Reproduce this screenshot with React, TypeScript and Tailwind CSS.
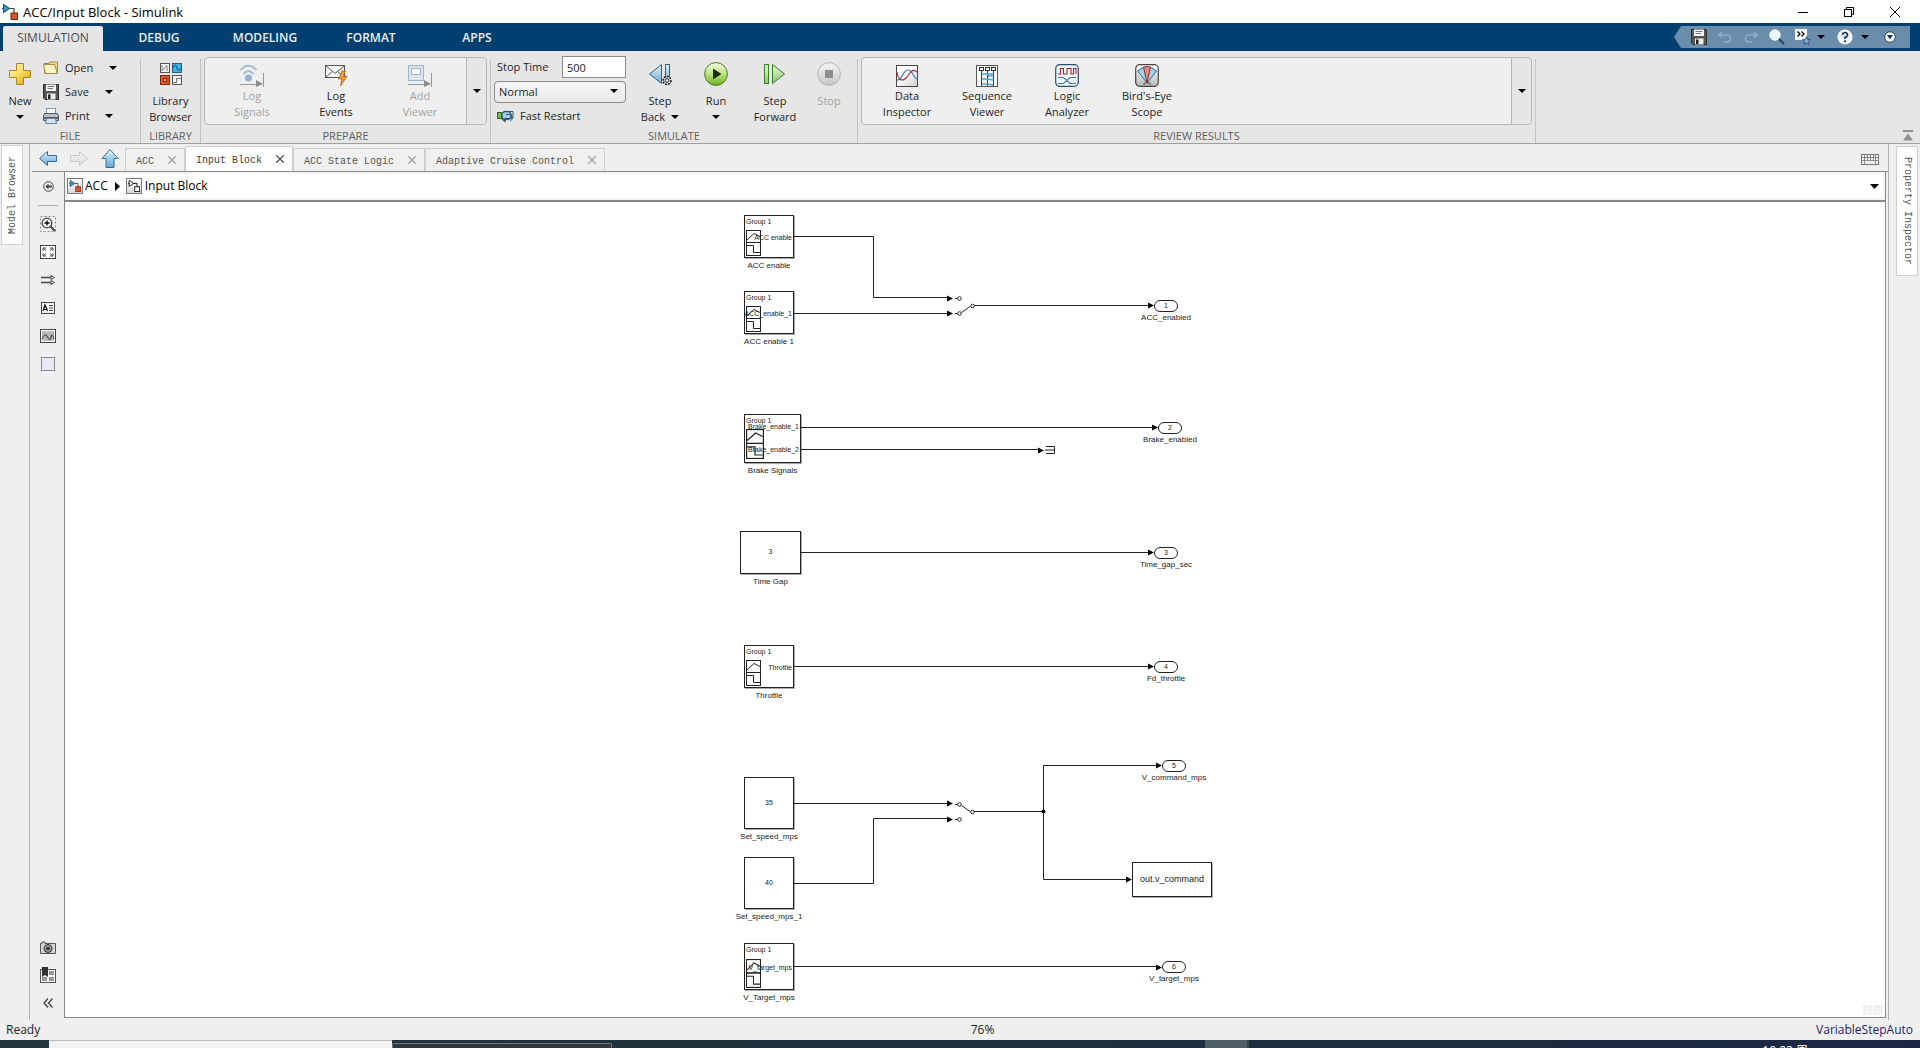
import type { ReactNode } from "react";

const UI = "font-['Open_Sans','Noto_Sans_CJK_SC',sans-serif]";
const MONO = "font-['Liberation_Mono',monospace]";

/* ---------- small icons ---------- */

function Caret({ wide = false }: { wide?: boolean }) {
  return (
    <svg width={wide ? 9 : 8} height={wide ? 5 : 4} viewBox="0 0 8 4" preserveAspectRatio="none" aria-hidden>
      <path d="M0 0H8L4 4Z" fill="#000" />
    </svg>
  );
}

function AppLogo({ size = 16, mono = false }: { size?: number; mono?: boolean }) {
  return (
    <svg width={size} height={size} viewBox="0 0 16 16" aria-hidden>
      <path d="M7 4.5H12V9" fill="none" stroke={mono ? "#000" : "#444"} strokeWidth="1.2" />
      <path d="M1.5 0.5V8.5L7.5 4.5Z" fill={mono ? "#fff" : "#3d9bd0"} stroke={mono ? "#000" : "#1f5878"} strokeWidth="1.1" />
      <path d="M0 4.5H2" stroke={mono ? "#000" : "#1f5878"} />
      <rect x="9" y="9" width="6.5" height="6.5" fill={mono ? "#fff" : "#d9532c"} stroke={mono ? "#000" : "#7d2c12"} strokeWidth="1.1" />
    </svg>
  );
}

function CrumbIcon({ mono = false }: { mono?: boolean }) {
  return (
    <span className="flex size-4 items-center justify-center border border-[#777] bg-linear-to-b from-white to-[#d8d8d8]">
      <AppLogo size={12} mono={mono} />
    </span>
  );
}

function PlusIcon() {
  return (
    <svg width="24" height="24" viewBox="0 0 24 24" aria-hidden>
      <defs>
        <linearGradient id="plus" x1="0" y1="0" x2="1" y2="1">
          <stop offset="0" stopColor="#fffbd0" />
          <stop offset="0.5" stopColor="#f9d95a" />
          <stop offset="1" stopColor="#dc9a1c" />
        </linearGradient>
      </defs>
      <path d="M8.5 1.5H15.5V8.5H22.5V15.5H15.5V22.5H8.5V15.5H1.5V8.5H8.5Z" fill="url(#plus)" stroke="#a8842c" />
    </svg>
  );
}

function FolderIcon() {
  return (
    <svg width="16" height="16" viewBox="0 0 16 16" aria-hidden>
      <path d="M1 3.5H6L7 2H14.5V13.5H2Z" fill="#f3dc8c" stroke="#9c8337" />
      <path d="M0.5 4.5H11.5L14.5 13.5H2.5Z" fill="#fdf3c4" stroke="#9c8337" strokeWidth="0.9" />
    </svg>
  );
}

function DiskIcon() {
  return (
    <svg width="16" height="16" viewBox="0 0 16 16" aria-hidden>
      <path d="M0.5 0.5H15.5V15.5H2L0.5 14Z" fill="#555" stroke="#2d2d2d" />
      <rect x="3" y="0.5" width="10" height="6.5" fill="#f5f5f5" />
      <path d="M4.5 2.5H11.5M4.5 4.5H10" stroke="#777" />
      <rect x="4" y="9.5" width="8.5" height="6" fill="#e9e9e9" />
      <rect x="5" y="10.5" width="2.5" height="4.5" fill="#222" />
    </svg>
  );
}

function PrinterIcon() {
  return (
    <svg width="16" height="16" viewBox="0 0 16 16" aria-hidden>
      <rect x="3.5" y="0.5" width="9" height="6" fill="#fff" stroke="#8a97a5" />
      <path d="M1.5 5.5H14.5L15.5 8V12.5H0.5V8Z" fill="#b9bec4" stroke="#54595f" />
      <path d="M1 9H15V11H1Z" fill="#5a6066" />
      <path d="M3.5 10.5H12.5L13.5 15.5H2.5Z" fill="#d4e6f4" stroke="#66809a" />
    </svg>
  );
}

function LibraryIcon() {
  return (
    <svg width="24" height="24" viewBox="0 0 24 24" aria-hidden>
      <rect x="1.5" y="1.5" width="9" height="9" fill="#eee" stroke="#555" />
      <path d="M3 3V9M3 9L8 3M8 9V4" stroke="#888" fill="none" />
      <rect x="13.5" y="1.5" width="9" height="9" fill="#3fb0e0" stroke="#1f6488" />
      <path d="M14 6C15.5 2.5 17 2.5 18 6S20.5 9 22 6" stroke="#124a68" fill="none" />
      <rect x="1.5" y="13.5" width="9" height="9" fill="#dd5527" stroke="#7a2b12" />
      <rect x="4.5" y="16.5" width="3" height="3" fill="#f6a07e" stroke="#7a2b12" />
      <rect x="13.5" y="13.5" width="9" height="9" fill="#f6f6f6" stroke="#555" />
      <path d="M14 20.5H17.5V16.5H22" stroke="#777" fill="none" />
    </svg>
  );
}

function LogSignalsIcon() {
  return (
    <svg width="24" height="24" viewBox="0 0 24 24" aria-hidden>
      <g fill="none" stroke="#a7bfd2" strokeWidth="2">
        <path d="M0.5 7Q8.5 -1.5 16.5 7" />
        <path d="M3.5 11Q8.5 5 13.5 11" />
      </g>
      <circle cx="8.5" cy="15" r="3.5" fill="#93b4cc" />
      <path d="M0 21.5H17M23.5 10V24" stroke="#999" strokeWidth="1.2" />
      <path d="M16 17V24L23 21Z" fill="#8b8b8b" />
    </svg>
  );
}

function LogEventsIcon() {
  return (
    <svg width="24" height="24" viewBox="0 0 24 24" aria-hidden>
      <rect x="1.5" y="2.5" width="19" height="12" fill="#fafafa" stroke="#555" />
      <path d="M2 3L11 10.5L20 3M2 14L8.5 8.5M20 14L13.5 8.5" fill="none" stroke="#555" />
      <path d="M18 8L14.5 16H18L16.5 23L23 13.5H19.5L21.5 8Z" fill="#f79a31" stroke="#a3501a" strokeWidth="0.7" />
    </svg>
  );
}

function AddViewerIcon() {
  return (
    <svg width="24" height="24" viewBox="0 0 24 24" aria-hidden>
      <rect x="0.5" y="2.5" width="15" height="15" fill="#dce5ee" stroke="#a3b3c2" />
      <rect x="3.5" y="5.5" width="9" height="6" fill="#fff" stroke="#9fb4c8" />
      <path d="M0 21.5H17M23.5 10V24" stroke="#999" strokeWidth="1.2" />
      <path d="M16 17V24L23 21Z" fill="#8b8b8b" />
    </svg>
  );
}

function FastRestartIcon() {
  return (
    <svg width="17" height="14" viewBox="0 0 17 14" aria-hidden>
      <rect x="0.5" y="3.5" width="4" height="6" fill="#6fbf4b" stroke="#3a5a2c" />
      <rect x="5" y="2.5" width="9" height="8" rx="3.5" fill="#a9cdea" stroke="#2f5878" strokeWidth="1.3" />
      <path d="M9 5.5H12.5A2.5 2 0 0 1 12.5 9.5H8V12.5L4.5 9.5" fill="none" stroke="#2f5878" strokeWidth="1.2" />
      <path d="M11.5 2.5H16V9L13 12.5" fill="none" stroke="#2f5878" />
    </svg>
  );
}

function StepBackIcon() {
  return (
    <svg width="24" height="24" viewBox="0 0 24 24" aria-hidden>
      <defs>
        <linearGradient id="sback" x1="0" y1="0" x2="0" y2="1">
          <stop offset="0" stopColor="#e3f1fb" />
          <stop offset="1" stopColor="#6fa9d4" />
        </linearGradient>
      </defs>
      <path d="M13.5 2.5V21.5L1.5 12Z" fill="url(#sback)" stroke="#2f6288" />
      <rect x="17.5" y="2.5" width="4" height="17" fill="url(#sback)" stroke="#2f6288" />
      <circle cx="19" cy="18.5" r="4" fill="#d8d8d8" stroke="#222" strokeWidth="1.6" strokeDasharray="2 1" />
      <circle cx="19" cy="18.5" r="1.8" fill="#fff" stroke="#222" />
    </svg>
  );
}

function RunIcon({ stop = false }: { stop?: boolean }) {
  const id = stop ? "stopball" : "runball";
  return (
    <svg width="24" height="24" viewBox="0 0 24 24" aria-hidden>
      <defs>
        <linearGradient id={id} x1="0" y1="0" x2="0" y2="1">
          <stop offset="0" stopColor={stop ? "#f4f4f4" : "#f3fbe4"} />
          <stop offset="0.5" stopColor={stop ? "#dedede" : "#bfe37c"} />
          <stop offset="1" stopColor={stop ? "#c4c4c4" : "#69b025"} />
        </linearGradient>
      </defs>
      <circle cx="12" cy="12" r="11.4" fill={`url(#${id})`} stroke={stop ? "#b5b5b5" : "#4e7a28"} />
      {stop ? <rect x="8" y="8" width="8" height="8" fill="#8e8e8e" /> : <path d="M9 6.5V17.5L17.5 12Z" fill="#1c2a14" />}
    </svg>
  );
}

function StepForwardIcon() {
  return (
    <svg width="24" height="24" viewBox="0 0 24 24" aria-hidden>
      <defs>
        <linearGradient id="sfwd" x1="0" y1="0" x2="0" y2="1">
          <stop offset="0" stopColor="#e6f6da" />
          <stop offset="1" stopColor="#8ccb6b" />
        </linearGradient>
      </defs>
      <rect x="1.5" y="2.5" width="4" height="19" fill="url(#sfwd)" stroke="#3d7a2a" />
      <path d="M9.5 2.5V21.5L21.5 12Z" fill="url(#sfwd)" stroke="#3d7a2a" />
    </svg>
  );
}

function DataInspectorIcon() {
  return (
    <svg width="24" height="24" viewBox="0 0 24 24" aria-hidden>
      <defs>
        <linearGradient id="insp" x1="0" y1="0" x2="1" y2="1">
          <stop offset="0.4" stopColor="#fff" />
          <stop offset="1" stopColor="#cfcfcf" />
        </linearGradient>
      </defs>
      <rect x="1.5" y="2.5" width="21" height="21" fill="url(#insp)" stroke="#444" />
      <path d="M2 17C7 18 8 7 13 7S18 15 22 16" fill="none" stroke="#3d7ab5" strokeWidth="1.2" />
      <path d="M2 9C3 17 7 19 11 15S17 4 22 9" fill="none" stroke="#b03030" strokeWidth="1.2" />
    </svg>
  );
}

function SequenceIcon() {
  return (
    <svg width="24" height="24" viewBox="0 0 24 24" aria-hidden>
      <rect x="1.5" y="2.5" width="21" height="21" fill="#fafafa" stroke="#555" />
      <g fill="#fff" stroke="#333">
        <rect x="4.5" y="4.5" width="4" height="3" />
        <rect x="10.5" y="4.5" width="4" height="3" />
        <rect x="16.5" y="4.5" width="4" height="3" />
      </g>
      <path d="M6.5 8V23M12.5 8V23M18.5 8V23" stroke="#333" />
      <path d="M6.5 11H18.5M6.5 16H12.5L18.5 17M6.5 21H12.5L18.5 22M12.5 13H18.5" stroke="#4aa3df" strokeWidth="1.4" fill="none" />
    </svg>
  );
}

function LogicIcon() {
  return (
    <svg width="24" height="24" viewBox="0 0 24 24" aria-hidden>
      <rect x="0.7" y="1.7" width="22.6" height="21.6" rx="4" fill="#f4f8fc" stroke="#2d4a75" strokeWidth="1.2" />
      <path d="M3 11H5.5V5.5H8.5V11H12V5.5H16V11H18.5V5.5H21V11" fill="none" stroke="#9c2626" strokeWidth="1.1" />
      <path d="M3 14.5H8.5L15 20.5H21M3 20.5H8.5L15 14.5H21" fill="none" stroke="#3a78b0" strokeWidth="1.1" />
    </svg>
  );
}

function BirdsEyeIcon() {
  return (
    <svg width="24" height="24" viewBox="0 0 24 24" aria-hidden>
      <defs>
        <linearGradient id="bird" x1="0" y1="0" x2="0" y2="1">
          <stop offset="0" stopColor="#fff" />
          <stop offset="1" stopColor="#b9b9b9" />
        </linearGradient>
      </defs>
      <rect x="0.7" y="1.7" width="22.6" height="21.6" rx="4" fill="url(#bird)" stroke="#444" strokeWidth="1.2" />
      <path d="M12 20L2.5 8Q12 0 21.5 8Z" fill="#9fd3f3" stroke="#33658a" />
      <path d="M12 20L8.5 4Q12 3 15.5 4Z" fill="#e08b80" stroke="#8e2f2a" />
      <path d="M9 22V20H15V22" fill="none" stroke="#555" />
    </svg>
  );
}

function NavArrow({ dir, off = false }: { dir: "left" | "right" | "up"; off?: boolean }) {
  const id = `nav-${dir}`;
  const d = {
    left: "M1.5 9.5L9.5 2.5V6.5H18.5V12.5H9.5V16.5Z",
    right: "M18.5 9.5L10.5 2.5V6.5H1.5V12.5H10.5V16.5Z",
    up: "M10 0.5L18 9.5H14V18.5H6V9.5H2Z",
  }[dir];
  return (
    <svg width="20" height="20" viewBox="0 0 20 20" aria-hidden>
      <defs>
        <linearGradient id={id} x1="0" y1="0" x2="0" y2="1">
          <stop offset="0" stopColor={off ? "#f2f2f2" : "#e2f2fb"} />
          <stop offset="1" stopColor={off ? "#dcdcdc" : "#5fa6d6"} />
        </linearGradient>
      </defs>
      <path d={d} fill={`url(#${id})`} stroke={off ? "#c9c9c9" : "#3b6c92"} />
    </svg>
  );
}

/* ---------- ribbon ---------- */

function Section({ title, className = "", children }: { title: string; className?: string; children: ReactNode }) {
  return (
    <>
      <section className={`flex shrink-0 flex-col ${className}`}>
        <div className="flex flex-1 pt-1">{children}</div>
        <h2 className="h-3.5 text-center text-[11px] leading-3.5 text-[#5f5f5f]">{title}</h2>
      </section>
      <div className="mt-2 w-px shrink-0 bg-[#c2c2c2]" />
    </>
  );
}

function BigButton({ icon, top, bottom, width, off = false }: { icon: ReactNode; top: string; bottom?: ReactNode; width: string; off?: boolean }) {
  return (
    <button
      disabled={off}
      className={`flex flex-col items-center pt-[7px] text-[11px] leading-4 ${width} ${off ? "text-[#a3a3a3]" : "text-[#1e1e1e]"}`}
    >
      {icon}
      <span className="mt-[7px]">{top}</span>
      <span className="flex h-4 items-center gap-1.5">{bottom}</span>
    </button>
  );
}

function FileRow({ icon, label, caret }: { icon: ReactNode; label: string; caret: string }) {
  return (
    <div className="flex h-6 items-center">
      <button className="flex items-center gap-1.5 text-[11px] text-[#1e1e1e]">
        {icon}
        {label}
      </button>
      <button aria-label={`${label} options`} className={`absolute ${caret}`}>
        <Caret />
      </button>
    </div>
  );
}

type GalleryItem = { icon: ReactNode; lines: string[]; off?: boolean };

function Gallery({ items, item, label }: { items: GalleryItem[]; item: string; label: string }) {
  return (
    <div className="mx-[3px] mt-0.5 flex h-[68px] flex-1 rounded border border-[#b5b5b5] bg-[#efefef]">
      <div className="flex flex-1 pl-[5px]">
        {items.map((g) => (
          <button
            key={g.lines.join(" ")}
            disabled={g.off}
            className={`flex flex-col items-center pt-[5px] text-[11px] leading-4 ${item} ${g.off ? "text-[#a3a3a3]" : "text-[#1e1e1e]"}`}
          >
            {g.icon}
            <span className="mt-px">{g.lines[0]}</span>
            <span>{g.lines[1]}</span>
          </button>
        ))}
      </div>
      <button aria-label={label} className="flex w-5 items-center justify-center rounded-r border-l border-[#b5b5b5] bg-[#e6e6e6]">
        <Caret />
      </button>
    </div>
  );
}

function Ribbon() {
  return (
    <div className="flex h-[93px] border-b border-[#a0a0a0] bg-[#e6e6e6]">
      <Section title="FILE" className="w-[140px]">
        <BigButton icon={<PlusIcon />} top="New" bottom={<Caret />} width="w-10" />
        <div className="relative ml-[3px] flex flex-1 flex-col pt-px">
          <FileRow icon={<FolderIcon />} label="Open" caret="left-[66px]" />
          <FileRow icon={<DiskIcon />} label="Save" caret="left-[62px]" />
          <FileRow icon={<PrinterIcon />} label="Print" caret="left-[62px]" />
        </div>
      </Section>
      <Section title="LIBRARY" className="w-[59px]">
        <BigButton icon={<LibraryIcon />} top="Library" bottom="Browser" width="w-full" />
      </Section>
      <Section title="PREPARE" className="w-[289px]">
        <Gallery
          label="More prepare tools"
          item="w-[84px]"
          items={[
            { icon: <LogSignalsIcon />, lines: ["Log", "Signals"], off: true },
            { icon: <LogEventsIcon />, lines: ["Log", "Events"] },
            { icon: <AddViewerIcon />, lines: ["Add", "Viewer"], off: true },
          ]}
        />
      </Section>
      <Section title="SIMULATE" className="w-[366px]">
        <div className="ml-[3px] flex w-[132px] flex-col gap-[3px] pt-px text-[11px] text-[#1e1e1e]">
          <div className="flex items-center justify-between pl-[3px]">
            <label htmlFor="stop-time">Stop Time</label>
            <input id="stop-time" defaultValue="500" className="h-[22px] w-16 border border-[#8c8c8c] bg-white pl-1 outline-none" />
          </div>
          <div className="relative h-[22px]">
            <select
              aria-label="Simulation mode"
              className="h-full w-full appearance-none rounded border border-[#8c8c8c] bg-linear-to-b from-[#f4f4f4] to-[#ebebeb] pl-1"
            >
              <option>Normal</option>
            </select>
            <span className="pointer-events-none absolute top-2 right-2">
              <Caret />
            </span>
          </div>
          <button className="flex h-5 items-center gap-1.5 pl-[3px]">
            <FastRestartIcon />
            Fast Restart
          </button>
        </div>
        <div className="ml-1.5 flex">
          <BigButton
            icon={<StepBackIcon />}
            top="Step"
            bottom={
              <>
                Back <Caret />
              </>
            }
            width="w-14"
          />
          <BigButton icon={<RunIcon />} top="Run" bottom={<Caret />} width="w-14" />
          <BigButton icon={<StepForwardIcon />} top="Step" bottom="Forward" width="w-[62px]" />
          <BigButton icon={<RunIcon stop />} top="Stop" width="w-[46px]" off />
        </div>
      </Section>
      <Section title="REVIEW RESULTS" className="w-[677px]">
        <Gallery
          label="More review tools"
          item="w-20"
          items={[
            { icon: <DataInspectorIcon />, lines: ["Data", "Inspector"] },
            { icon: <SequenceIcon />, lines: ["Sequence", "Viewer"] },
            { icon: <LogicIcon />, lines: ["Logic", "Analyzer"] },
            { icon: <BirdsEyeIcon />, lines: ["Bird's-Eye", "Scope"] },
          ]}
        />
      </Section>
      <div className="flex flex-1 items-end justify-end pr-[7px] pb-0.5">
        <button aria-label="Minimize toolstrip">
          <svg width="10" height="11" viewBox="0 0 10 11" fill="#8f8f8f" aria-hidden>
            <path d="M5 3.5L0 10.5H10Z" />
            <rect width="10" height="2" />
          </svg>
        </button>
      </div>
    </div>
  );
}

/* ---------- title and ribbon tabs ---------- */

function TitleBar() {
  const win = "flex w-[46px] items-center justify-center";
  return (
    <header className="flex h-[23px] bg-white pr-0.5">
      <div className="flex flex-1 items-center gap-[5px] pl-0.5">
        <AppLogo />
        <h1 className="text-[13px] leading-5 text-black">ACC/Input Block - Simulink</h1>
      </div>
      <button aria-label="Minimize" className={win}>
        <svg width="10" height="10" aria-hidden><path d="M0 5.5H10" stroke="#000" /></svg>
      </button>
      <button aria-label="Restore" className={win}>
        <svg width="10" height="10" fill="none" stroke="#000" aria-hidden>
          <rect x="0.5" y="2.5" width="7" height="7" />
          <path d="M2.5 2.5V0.5H9.5V7.5H7.5" />
        </svg>
      </button>
      <button aria-label="Close" className={win}>
        <svg width="10" height="10" stroke="#000" aria-hidden><path d="M0 0L10 10M10 0L0 10" /></svg>
      </button>
    </header>
  );
}

function QuickAccess() {
  const btn = "flex w-[26px] items-center justify-center";
  return (
    <div className="mt-[3px] flex h-[22px] bg-[#6a8dac] pr-[7px] pl-3 [clip-path:polygon(7px_0,100%_0,100%_100%,7px_100%,0_50%)]">
      <button aria-label="Save" className={btn}><DiskIcon /></button>
      <button aria-label="Undo" className={btn}>
        <svg width="16" height="16" viewBox="0 0 16 16" fill="none" stroke="#8fb0cc" strokeWidth="1.6" aria-hidden>
          <path d="M5 3L2 6L5 9M2 6H10A3.5 3.5 0 0 1 10 13H7" />
        </svg>
      </button>
      <button aria-label="Redo" className={btn}>
        <svg width="16" height="16" viewBox="0 0 16 16" fill="none" stroke="#8fb0cc" strokeWidth="1.6" aria-hidden>
          <path d="M11 3L14 6L11 9M14 6H6A3.5 3.5 0 0 0 6 13H9" />
        </svg>
      </button>
      <button aria-label="Search" className={btn}>
        <svg width="16" height="16" viewBox="0 0 16 16" aria-hidden>
          <path d="M9.5 9.5L15 15" stroke="#1f4a74" strokeWidth="2.4" />
          <circle cx="6" cy="6" r="5.2" fill="#e9f3fa" stroke="#fff" />
        </svg>
      </button>
      <button aria-label="Favorites" className={btn}>
        <svg width="16" height="16" viewBox="0 0 16 16" aria-hidden>
          <rect width="12" height="11" fill="#fff" />
          <path d="M2.5 2.5L5 5L2.5 7.5M6.5 2.5L9 5L6.5 7.5" fill="none" stroke="#000" strokeWidth="1.3" />
          <path d="M11.5 7.5L12.7 10.4L15.7 10.6L13.4 12.5L14.2 15.5L11.5 13.9L8.9 15.5L9.6 12.5L7.3 10.6L10.3 10.4Z" fill="#7fa6c9" stroke="#24507c" strokeWidth="0.8" />
        </svg>
      </button>
      <button aria-label="Favorites menu" className="flex w-2.5 items-center justify-center"><Caret /></button>
      <button aria-label="Help" className={`ml-1.5 ${btn}`}>
        <svg width="16" height="16" viewBox="0 0 16 16" aria-hidden>
          <circle cx="8" cy="8" r="7.6" fill="#eef4f9" />
          <path d="M5.5 6A2.5 2.4 0 1 1 8 8.3V10" fill="none" stroke="#1f3a56" strokeWidth="1.7" />
          <circle cx="8" cy="12.3" r="1.1" fill="#1f3a56" />
        </svg>
      </button>
      <button aria-label="Help menu" className="ml-0.5 flex w-2.5 items-center justify-center"><Caret /></button>
      <button aria-label="Customize" className={`ml-[7px] ${btn}`}>
        <svg width="12" height="12" viewBox="0 0 12 12" aria-hidden>
          <circle cx="6" cy="6" r="5.2" fill="#fff" stroke="#0b3560" strokeWidth="0.8" />
          <path d="M3 4H9L6 8.5Z" fill="#0b3560" />
        </svg>
      </button>
    </div>
  );
}

function RibbonTabs() {
  return (
    <nav className="flex h-7 bg-[#004071] pr-2.5">
      <div role="tablist" className="flex flex-1 gap-1.5 pt-[3px] pl-[3px]">
        {["SIMULATION", "DEBUG", "MODELING", "FORMAT", "APPS"].map((t, i) => (
          <button
            key={t}
            role="tab"
            aria-selected={i === 0}
            className={`w-[100px] rounded-t-xs pb-0.5 text-xs ${i === 0 ? "bg-[#e6e6e6] text-[#4a4a4a]" : "font-semibold text-[#e8eff5]"}`}
          >
            {t}
          </button>
        ))}
      </div>
      <QuickAccess />
    </nav>
  );
}

/* ---------- editor ---------- */

const docs = ["ACC", "Input Block", "ACC State Logic", "Adaptive Cruise Control"];

function DocTabs() {
  const nav = "flex h-full w-[31px] items-center justify-center pt-0.5";
  return (
    <div className="ml-0.5 flex h-7 items-end border-b border-[#85888d]">
      <button aria-label="Back" className={nav}><NavArrow dir="left" /></button>
      <button aria-label="Forward" disabled className={nav}><NavArrow dir="right" off /></button>
      <button aria-label="Up to parent" className={nav}><NavArrow dir="up" /></button>
      {docs.map((d) => {
        const on = d === "Input Block";
        return (
          <div
            key={d}
            className={`flex items-center gap-3.5 border border-b-0 border-[#cfcfcf] pr-2 pl-2.5 text-[10px] ${MONO} ${on ? "h-[25px] bg-white text-[#3c3c3c]" : "h-[23px] bg-[#f0f0f0] text-[#555]"}`}
          >
            <button className="pt-0.5">{d}</button>
            <button aria-label={`Close ${d}`}>
              <svg width="8" height="8" stroke={on ? "#555" : "#a2a2a2"} strokeWidth="1.3" aria-hidden><path d="M0 0L8 8M8 0L0 8" /></svg>
            </button>
          </div>
        );
      })}
      <button aria-label="Keyboard shortcuts" className="mr-[9px] mb-1.5 ml-auto">
        <svg width="18" height="11" viewBox="0 0 18 11" fill="none" stroke="#777" aria-hidden>
          <rect x="0.5" y="0.5" width="17" height="10" />
          <path d="M1 3.5H17M1 6.5H17M3.5 1V10M14.5 1V10M6.5 1V6M9.5 1V6M12.5 1V6" strokeWidth="0.8" />
        </svg>
      </button>
    </div>
  );
}

function Breadcrumb() {
  return (
    <div className="flex h-[30px] items-center border-b-2 border-[#85888d] pr-1.5 pl-0.5 text-xs text-black shadow-[inset_0_0_0_2px_#f4f4f4]">
      <a href="#acc" className="flex items-center gap-0.5"><CrumbIcon />ACC</a>
      <svg width="5" height="9" className="mr-1.5 ml-[7px]" aria-hidden><path d="M0 0L5 4.5L0 9Z" /></svg>
      <a href="#input-block" className="flex items-center gap-[3px]"><CrumbIcon mono />Input Block</a>
      <button aria-label="Path history" className="ml-auto"><Caret wide /></button>
    </div>
  );
}

function Palette() {
  const tools: [string, ReactNode][] = [
    ["Zoom", <>
      <rect x="0.5" y="0.5" width="15" height="15" strokeDasharray="2 2" stroke="#888" />
      <circle cx="7" cy="7" r="4.8" fill="#fff" strokeWidth="1.3" />
      <path d="M4.5 7H9.5M7 4.5V9.5" stroke="#000" strokeWidth="1.3" />
      <path d="M10.5 10.5L15 15" strokeWidth="2" />
    </>],
    ["Fit to view", <>
      <rect x="0.5" y="1.5" width="15" height="13" fill="#fafafa" />
      <path d="M3 7V4H6M3.5 4.5L6 6.5M10 4H13V7M12.5 4.5L10 6.5M3 9.5V12H6M3.5 11.5L6 9.5M13 9.5V12H10M12.5 11.5L10 9.5" />
    </>],
    ["Signals", <>
      <path d="M1 5.5H11M1 10.5H11" strokeWidth="1.3" />
      <path d="M11 3.5L14.5 5.5L11 7.5ZM11 8.5L14.5 10.5L11 12.5Z" fill="#fff" />
    </>],
    ["Annotation", <>
      <rect x="1.5" y="2.5" width="13" height="11" fill="#fafafa" />
      <path d="M3 11L5 5L7.5 11M3.5 9.5H7" stroke="#000" strokeWidth="1.2" />
      <path d="M9 5.5H13M9 8H13M9 10.5H13" />
    </>],
    ["Image", <>
      <rect x="0.5" y="1.5" width="15" height="13" fill="#fff" />
      <rect x="2" y="3" width="12" height="10" fill="#bbb" stroke="none" />
      <path d="M2 11Q5 4 7.5 9T11 9T14 11" fill="none" stroke="#555" strokeWidth="1.3" />
    </>],
    ["Area", <rect x="1.5" y="1.5" width="13" height="13" fill="#e9e9f8" stroke="#8a8a8a" />],
  ];
  const btn = "flex h-7 items-center justify-center";
  return (
    <div className="flex w-[34px] flex-col pb-[3px] pl-0.5">
      <button aria-label="Hide browser" className={btn}>
        <svg width="11" height="11" viewBox="0 0 11 11" fill="none" stroke="#444" aria-hidden>
          <circle cx="5.5" cy="5.5" r="4.8" />
          <path d="M3 5.5H9" strokeWidth="2" />
          <path d="M5.5 2.5L2.5 5.5L5.5 8.5Z" fill="#444" stroke="none" />
        </svg>
      </button>
      <div className="flex h-2.5 items-center justify-center"><div className="h-px w-5 bg-[#b0b0b0]" /></div>
      {tools.map(([name, shape]) => (
        <button key={name} aria-label={name} className={btn}>
          <svg width="16" height="16" viewBox="0 0 16 16" fill="none" stroke="#444" aria-hidden>{shape}</svg>
        </button>
      ))}
      <button aria-label="Screenshot" className={`mt-auto ${btn}`}>
        <svg width="16" height="13" viewBox="0 0 16 13" aria-hidden>
          <path d="M2 1H5V2.5H15.5V12.5H0.5V2.5H2Z" fill="#d5d5d5" stroke="#555" />
          <circle cx="8" cy="7.5" r="4" fill="#999" stroke="#333" />
          <circle cx="8" cy="7.5" r="1.8" fill="#333" />
        </svg>
      </button>
      <button aria-label="Bookmarks" className={btn}>
        <svg width="16" height="16" viewBox="0 0 16 16" aria-hidden>
          <rect x="0.5" y="2.5" width="15" height="13" fill="#f5f5f5" stroke="#555" />
          <path d="M9 4H14V8H9ZM9 10H14V14H9ZM2 10H7V14H2Z" fill="#999" />
          <path d="M2 0H8V10L5 8L2 10Z" fill="#333" />
        </svg>
      </button>
      <button aria-label="Collapse palette" className={btn}>
        <svg width="10" height="10" fill="none" stroke="#444" strokeWidth="1.3" aria-hidden><path d="M5 0.5L1 5L5 9.5M9.5 0.5L5.5 5L9.5 9.5" /></svg>
      </button>
    </div>
  );
}

/* ---------- block diagram (coordinates are canvas units) ---------- */

type Block = {
  x: number;
  y: number;
  w: number;
  h: number;
  name?: string;
  value?: string;
  big?: boolean;
  scope?: { y: number; w: number; h: number };
  ports?: { y: number; text: string }[];
};

const blocks: Block[] = [
  { x: 9, y: 12, w: 50, h: 43, name: "ACC enable", scope: { y: 14, w: 15, h: 26 }, ports: [{ y: 22, text: "ACC enable" }] },
  { x: 9, y: 88, w: 50, h: 43, name: "ACC enable 1", scope: { y: 14, w: 15, h: 26 }, ports: [{ y: 22, text: "ACC_enable_1" }] },
  {
    x: 9, y: 211, w: 57, h: 49, name: "Brake Signals", scope: { y: 14, w: 18, h: 30 },
    ports: [{ y: 12, text: "Brake_enable_1" }, { y: 35, text: "Brake_enable_2" }],
  },
  { x: 5, y: 328, w: 61, h: 43, name: "Time Gap", value: "3" },
  { x: 9, y: 442, w: 50, h: 43, name: "Throttle", scope: { y: 14, w: 15, h: 26 }, ports: [{ y: 22, text: "Throttle" }] },
  { x: 9, y: 574, w: 50, h: 52, name: "Set_speed_mps", value: "35" },
  { x: 9, y: 654, w: 50, h: 52, name: "Set_speed_mps_1", value: "40" },
  { x: 9, y: 740, w: 50, h: 47, name: "V_Target_mps", scope: { y: 15, w: 15, h: 29 }, ports: [{ y: 24, text: "V_target_mps" }] },
  { x: 397, y: 659, w: 80, h: 35, value: "out.v_command", big: true },
];

const outports = [
  { x: 431, y: 103, name: "ACC_enabled" },
  { x: 435, y: 225, name: "Brake_enabled" },
  { x: 431, y: 350, name: "Time_gap_sec" },
  { x: 431, y: 464, name: "Fd_throttle" },
  { x: 439, y: 563, name: "V_command_mps" },
  { x: 439, y: 764, name: "V_target_mps" },
];

const wires = [
  "M59 33.5H138.5V94.5H213",
  "M59 110.5H213",
  "M239 102.5H414",
  "M66 224.5H418",
  "M66 246.5H304",
  "M66 349.5H414",
  "M59 463.5H414",
  "M59 600.5H213",
  "M59 680.5H138.5V615.5H213",
  "M239 608.5H308.5",
  "M422 562.5H308.5V676.5H391",
  "M59 763.5H422",
];

// tips of the arrow heads
const arrows = [
  [218, 95], [218, 110], [419, 102], [423, 224], [309, 247], [419, 349],
  [419, 463], [218, 600], [218, 616], [427, 562], [397, 676], [427, 764],
];

function Diagram() {
  return (
    <div className="relative mx-auto mt-px h-[800px] w-[480px] font-['Liberation_Sans',sans-serif] text-[#222]">
      {blocks.map((b) => (
        <div
          key={b.name ?? b.value}
          className="absolute border border-[#222] bg-white shadow-[1px_1px_0_#aaa]"
          style={{ left: b.x, top: b.y, width: b.w, height: b.h }}
        >
          {b.value && (
            <span className={`flex h-full items-center justify-center ${b.big ? "text-[9px]" : "text-[7px]"}`}>{b.value}</span>
          )}
          {b.scope && (
            <>
              <span className="absolute top-px left-px text-[7px] leading-[10px] whitespace-nowrap">Group 1</span>
              <svg
                className="absolute left-px"
                style={{ top: b.scope.y }}
                width={b.scope.w}
                height={b.scope.h}
                viewBox="0 0 15 26"
                preserveAspectRatio="none"
                fill="none"
                stroke="#222"
                aria-hidden
              >
                <rect x="0.5" y="0.5" width="14" height="12" />
                <rect x="0.5" y="12.5" width="14" height="13" />
                <path d="M1 10L8 3.5L14 6.5M1 15.5H7.5V22.5H14" />
              </svg>
            </>
          )}
          {b.ports?.map((p) => (
            <span
              key={p.text}
              className="absolute right-px -translate-y-1/2 text-[7px] leading-2 whitespace-nowrap"
              style={{ top: p.y }}
            >
              {p.text}
            </span>
          ))}
          {b.name && (
            <span className="absolute top-full left-1/2 mt-1 -translate-x-1/2 text-[8px] leading-[10px] whitespace-nowrap">{b.name}</span>
          )}
        </div>
      ))}

      <svg className="pointer-events-none absolute inset-0" width="480" height="800" fill="none" stroke="#222" aria-hidden>
        {wires.map((d) => <path key={d} d={d} />)}
        {arrows.map(([x, y]) => (
          <path key={`${x}-${y}`} transform={`translate(${x} ${y + 0.5})`} d="M-6 -3V3L0 0Z" fill="#000" stroke="none" />
        ))}
        <path d="M220 95.5H223M220 110.5H223M226.5 109.5L235 103.5M220 601.5H223M220 616.5H223M226.5 602.5L235 608.5" />
        <g fill="#fff">
          <circle cx="224.5" cy="95.5" r="1.8" />
          <circle cx="224.5" cy="110.5" r="1.8" />
          <circle cx="237.5" cy="103" r="1.8" />
          <circle cx="224.5" cy="601.5" r="1.8" />
          <circle cx="224.5" cy="616.5" r="1.8" />
          <circle cx="237.5" cy="609" r="1.8" />
        </g>
        <circle cx="308.5" cy="608.5" r="2" fill="#000" stroke="none" />
        <path d="M311 243.5H319.5V250.5H311M310 247H319.5" />
      </svg>

      {outports.map((o, i) => (
        <div
          key={o.name}
          className="absolute flex h-3 w-6 -translate-x-1/2 -translate-y-1/2 items-center justify-center rounded-full border border-[#222] bg-white text-[7px]"
          style={{ left: o.x, top: o.y }}
        >
          {i + 1}
          <span className="absolute top-full left-1/2 mt-0.5 -translate-x-1/2 text-[8px] leading-[10px] whitespace-nowrap">{o.name}</span>
        </div>
      ))}
    </div>
  );
}

function Editor() {
  return (
    <div className="flex min-h-0 flex-1 bg-[#efefef]">
      <aside className="w-[29px] pt-px pl-px">
        <button className={`h-[100px] w-[22px] rotate-180 border border-[#cfcfcf] bg-white text-[10px] text-[#555] [writing-mode:vertical-rl] ${MONO}`}>
          Model Browser
        </button>
      </aside>
      <div className="flex min-w-0 flex-1 flex-col border-x border-[#b0b0b0]">
        <DocTabs />
        <div className="flex min-h-0 flex-1">
          <Palette />
          <main className="relative mr-0.5 mb-0.5 flex min-w-0 flex-1 flex-col border border-t-0 border-[#85888d] bg-white">
            <Breadcrumb />
            <Diagram />
            <div className="absolute right-0.5 bottom-0.5 flex h-2.5 gap-px">
              <span className="w-1 bg-[#f1f1f1]" />
              <span className="w-1 bg-[#f1f1f1]" />
              <span className="w-2.5 bg-[#f1f1f1]" />
            </div>
          </main>
        </div>
      </div>
      <aside className="w-[31px] pt-0.5 pl-[7px]">
        <button className={`h-[130px] w-[22px] border border-[#cfcfcf] bg-white text-[10px] text-[#555] [writing-mode:vertical-rl] ${MONO}`}>
          Property Inspector
        </button>
      </aside>
    </div>
  );
}

function Taskbar() {
  return (
    <div className="flex h-2 overflow-hidden bg-linear-to-r from-[#24363f] via-[#20303c] to-[#1c2744]">
      <div className="ml-[49px] w-[343px] border-t border-[#bbb] bg-[#f1f1f1]" />
      <div className="mt-[3px] w-[220px] rounded-t-xs border border-b-0 border-[#6d7479] bg-[#343638]" />
      <div className="ml-[593px] w-11 border-r-2 border-[#3a464e] bg-[#4f5d66]" />
      <time className="mt-[3px] mr-[112px] ml-auto text-[12px] leading-4 whitespace-nowrap text-white">10:22 周</time>
    </div>
  );
}

export default function App() {
  return (
    <div className={`flex h-screen flex-col overflow-hidden bg-[#efefef] ${UI}`}>
      <TitleBar />
      <RibbonTabs />
      <Ribbon />
      <Editor />
      <footer className="grid h-5 shrink-0 grid-cols-[1fr_auto_1fr] items-center pr-[7px] pl-1.5 text-xs text-[#1e1e1e]">
        <span>Ready</span>
        <span className="pl-[46px]">76%</span>
        <a href="#solver" className="text-right text-[#1c1c6c]">VariableStepAuto</a>
      </footer>
      <Taskbar />
    </div>
  );
}
